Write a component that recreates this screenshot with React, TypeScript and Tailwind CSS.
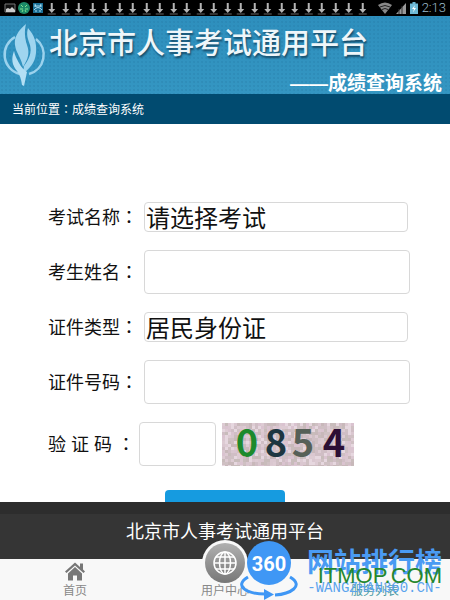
import React from 'react';

const captchaDigits = [
  { char: '0', x: 25, color: '#1d8a2c' },
  { char: '8', x: 54, color: '#1d3640' },
  { char: '5', x: 81, color: '#566057' },
  { char: '4', x: 112, color: '#2c0f35' },
];

const noiseColors = ['#e0cdd6', '#cfbcc3', '#dcc8d2', '#c4b4b4', '#ecdde6', '#cdbfc0', '#dcc3d2', '#c4b9b6'];

const noise = Array.from({ length: 44 * 15 }, (_, i) => {
  const n = Math.abs(Math.sin(i * 12.9898) * 43758.5453);
  return noiseColors[Math.floor((n - Math.floor(n)) * noiseColors.length)];
});

const Captcha: React.FC = () => (
  <svg viewBox="0 0 132 43" className="h-[43px] w-[132px] shrink-0" role="img" aria-label="0854">
    <rect width="132" height="43" fill="#d3c3ca" />
    {noise.map((fill, i) => (
      <rect key={i} x={(i % 44) * 3} y={Math.floor(i / 44) * 3} width="3" height="3" fill={fill} opacity="0.75" />
    ))}
    {captchaDigits.map(({ char, x, color }) => (
      <text
        key={char}
        x={x}
        y="34"
        fill={color}
        textAnchor="middle"
        className="font-['Noto_Sans_CJK_SC',sans-serif] text-[38px] font-bold"
      >
        {char}
      </text>
    ))}
  </svg>
);

const StatusBar: React.FC = () => (
  <div className="flex h-4 shrink-0 items-center bg-black text-[#b5b5b5]">
    <div className="flex w-[45px] items-center gap-0.5 pl-1">
      <svg viewBox="0 0 12 12" className="h-3 w-3">
        <path d="M1 2h10v8H1z" fill="#111" stroke="#777" />
        <path d="M2 10V7l2-1 2 1 2-2 3 3v2z" fill="#ccc" />
      </svg>
      <svg viewBox="0 0 12 12" className="h-3 w-3">
        <circle cx="6" cy="6" r="6" fill="#1c8a68" />
        <path d="M3 3l2 2M9 3L7 5M2 7h3M7 7h3M4 10l1-2M8 10L7 8" stroke="#7fe08e" />
      </svg>
      <svg viewBox="0 0 12 12" className="h-3 w-3">
        <path d="M1 1h10v10H1z" fill="#1b6f96" />
        <path d="M2 4h8M3 2l1 3M9 2L8 5M2 8q4-5 8 0M3 9h2M7 9h2" stroke="#a7d9ec" fill="none" />
      </svg>
    </div>
    <div className="flex flex-1">
      {Array.from({ length: 24 }, (_, i) => (
        <svg key={i} viewBox="0 0 13 13" className="h-[13px] min-w-0 flex-1">
          <path d="M5.5 1h2v6h2.5L6.5 11 3 7h2.5z" fill="currentColor" />
          <path d="M2.500 12h8" stroke="#666" />
        </svg>
      ))}
    </div>
    <div className="flex w-[81px] items-center justify-end gap-1 pr-1">
      <svg viewBox="0 0 14 12" className="h-3 w-3.5">
        <path d="M0 3Q7-2 14 3L7 12z" fill="#888" />
        <path d="M2 5q5-3 10 0M4 7.500q3-2 6 0" stroke="#222" fill="none" />
      </svg>
      <svg viewBox="0 0 10 12" className="h-3 w-2.5">
        <path d="M0 12L10 1v11z" fill="#999" />
        <path d="M3 7v5M6 4v8" stroke="#333" />
      </svg>
      <svg viewBox="0 0 8 12" className="h-3 w-2">
        <path d="M2.500 0h3v1.500H8V12H0V1.500h2.500z" fill="#6eb9d6" />
        <path d="M5 3L2 7h2L3 10.500 6 6H4z" fill="#fff" />
      </svg>
      <span className="font-['Roboto',sans-serif] text-[13px] leading-4 font-light text-[#9dbccb]">2:13</span>
    </div>
  </div>
);

const Logo: React.FC = () => (
  <svg viewBox="0 0 44 64" className="h-16 w-11 shrink-0">
    <path
      d="M13 13A20 20 0 0 0 18 50M34 15A20 20 0 0 1 27 50"
      fill="none"
      stroke="#9bd2ed"
      strokeWidth="2.500"
    />
    <path d="M24 0C16 7 12 13 13 21c1 8 6 12 8 22 5-8 7-14 4-22-2-7-3-13-1-21z" fill="#9fd5ef" />
    <path d="M26 4c-2 7 0 11 2 17 2 8-1 14-6 21l-1 8c7-6 12-11 13-21C35 18 32 11 26 4z" fill="#9fd5ef" />
    <path d="M12 27c-3 8-2 14 3 20 3 4 4 8 5 14l2 1 3-14c-3-2-6-5-8-9-2-4-4-7-5-12z" fill="#b3dff4" />
  </svg>
);

const GlobeButton: React.FC = () => (
  <svg viewBox="0 0 46 43" className="h-[43px] w-[46px] shrink-0">
    <defs>
      <linearGradient id="globe" x1="0" y1="0" x2="0" y2="1">
        <stop offset="0" stopColor="#b0b0b0" />
        <stop offset="1" stopColor="#777" />
      </linearGradient>
    </defs>
    <circle cx="23" cy="23" r="23" fill="#f8f8f8" />
    <circle cx="23" cy="23" r="20" fill="url(#globe)" />
    <g fill="none" stroke="#fff" strokeWidth="1.500">
      <circle cx="23" cy="23" r="11" />
      <ellipse cx="23" cy="23" rx="5.500" ry="11" />
      <path d="M23 12v22M12 23h22M14 17h18M14 29h18" />
    </g>
  </svg>
);

const Watermark: React.FC = () => (
  <div className="pointer-events-none absolute right-2 bottom-0 flex items-end gap-2">
    <svg viewBox="0 0 60 60" className="h-[60px] w-[60px]">
      <path d="M9 37C-6 46 8 54 26 54M51 37c15 9 0 17-15 18" fill="none" stroke="#3f97f5" strokeWidth="3" />
      <path d="M25 49l10 5.500-10 5.500z" fill="#3f97f5" />
      <circle cx="30" cy="23" r="22" fill="#3f97f5" />
      <text x="30" y="31" textAnchor="middle" fill="#fff" className="font-['Roboto',sans-serif] text-[20px] font-bold">
        360
      </text>
    </svg>
    <div className="relative flex flex-col items-center pb-1">
      <span className="text-[27px] leading-[34px] font-bold text-[#4a9bf3]">网站排行榜</span>
      <span className="font-['Liberation_Mono',monospace] text-sm leading-4 text-[#5ba4ee]">-WANGZHAN360.CN-</span>
      <span className="absolute right-0 bottom-3 font-['Liberation_Sans',sans-serif] text-[22px] leading-6 text-[#25872c]">
        ITMOP.COM
      </span>
    </div>
  </div>
);

interface FieldLabelProps {
  htmlFor: string;
  text: string;
  className?: string;
}

const FieldLabel: React.FC<FieldLabelProps> = ({ htmlFor, text, className = 'w-24' }) => (
  <label htmlFor={htmlFor} className={`shrink-0 text-lg leading-6 whitespace-pre ${className}`}>
    {text}
    <span className="font-['Noto_Sans_CJK_TC',sans-serif]" lang="zh-TW">：</span>
  </label>
);

const fieldBorder = 'min-w-0 rounded border border-[#d8d8d8] bg-white outline-none';
const selectStyle = `${fieldBorder} mr-0.5 h-[30px] flex-1 appearance-none pt-0.5 pl-px text-2xl leading-7`;

const App: React.FC = () => (
  <div
    className="relative flex h-screen flex-col overflow-hidden bg-white font-['Liberation_Sans','Noto_Sans_CJK_SC',sans-serif] text-[#111]"
    lang="zh-CN"
  >
    <StatusBar />

    <header className="flex h-[78px] shrink-0 bg-linear-to-b from-[#2e8fbd] to-[#3496c2]">
      <div className="flex flex-1 bg-[radial-gradient(#1f6f9a33_1px,transparent_1px)] bg-size-[4px_4px] pt-2 pl-0.5">
        <Logo />
        <div className="flex flex-1 flex-col pr-2 pl-[3px] text-white">
          <h1 className="text-[29px] leading-10 font-medium whitespace-nowrap text-[#eef6fa] [text-shadow:1px_2px_2px_#174b68]">
            北京市人事考试通用平台
          </h1>
          <p className="mt-2 text-right text-[19px] leading-6 font-bold whitespace-nowrap">——成绩查询系统</p>
        </div>
      </div>
    </header>

    <nav className="h-[30px] shrink-0 bg-[#014b70] px-3 text-xs leading-[30px] text-white" aria-label="当前位置">
      当前位置<span className="font-['Noto_Sans_CJK_TC',sans-serif]" lang="zh-TW">：</span>成绩查询系统
    </nav>

    <main className="min-h-0 flex-1 overflow-hidden">
      <form className="flex flex-col gap-[18px] pt-[78px] pr-10 pl-12">
        <div className="flex items-center">
          <FieldLabel htmlFor="exam" text="考试名称" />
          <select id="exam" className={selectStyle}>
            <option>请选择考试</option>
          </select>
        </div>
        <div className="flex items-center">
          <FieldLabel htmlFor="name" text="考生姓名" />
          <input id="name" type="text" className={`${fieldBorder} h-11 flex-1 px-2`} />
        </div>
        <div className="flex items-center">
          <FieldLabel htmlFor="idType" text="证件类型" />
          <select id="idType" className={selectStyle}>
            <option>居民身份证</option>
          </select>
        </div>
        <div className="flex items-center">
          <FieldLabel htmlFor="idNumber" text="证件号码" />
          <input id="idNumber" type="text" className={`${fieldBorder} h-11 flex-1 px-2`} />
        </div>
        <div className="flex items-center">
          <FieldLabel htmlFor="captcha" text="验 证 码 " className="w-[91px]" />
          <input id="captcha" type="text" className={`${fieldBorder} mr-1.5 h-11 w-[77px] px-2`} />
          <Captcha />
        </div>
        <button type="submit" aria-label="查询" className="mt-1.5 ml-[117px] h-10 w-[120px] rounded bg-[#169be0]" />
      </form>
    </main>

    <footer className="shrink-0">
      <div className="border-t-[12px] border-[#2d2d2d] bg-[#353535] pt-1.5 pb-3.5 text-center text-lg leading-[25px] text-white">
        北京市人事考试通用平台
      </div>
      <div className="grid h-[41px] grid-cols-3 grid-rows-1 bg-[#f8f8f8] text-xs leading-4 text-[#888]">
        <a href="#home" className="flex min-h-0 flex-col items-center justify-end gap-0.5 pb-px">
          <svg viewBox="0 0 20 18" className="h-[19px] w-5 shrink-0">
            <path d="M10 0L0 9l1.500 1.500L10 3l8.500 7.500L20 9l-2-2V1h-3v3.500z" fill="#777" />
            <path d="M10 4.500L3 11v7h5v-5h4v5h5v-7z" fill="#777" />
          </svg>
          首页
        </a>
        <a href="#user" className="flex min-h-0 flex-col items-center justify-end pb-px">
          <GlobeButton />
          用户中心
        </a>
        <a href="#services" className="flex min-h-0 flex-col items-center justify-end pb-px text-[#4c9aa5]">
          服务列表
        </a>
      </div>
    </footer>

    <Watermark />
  </div>
);

export default App;
